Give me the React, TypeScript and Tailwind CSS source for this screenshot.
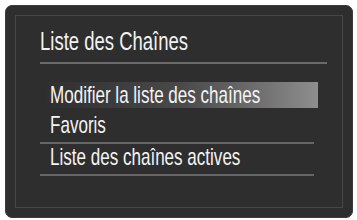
const items = ['Modifier la liste des chaînes', 'Favoris', 'Liste des chaînes actives'];

export default function App() {
  return (
    <div className="w-[357px] h-[220px] bg-white pt-[5px] pl-[5px]">
      <div className="w-[348px] h-[213px] rounded-[7px] bg-[#2e2e2e] border border-[#3b3b3b] p-[9px]">
        <div className="h-full border border-[#474747] pl-[24px] pt-[12px] font-['Liberation_Sans',sans-serif]">
          <div className="text-[25px] leading-[26px] text-[#f2f2f2] whitespace-nowrap">
            <span className="inline-block origin-left scale-x-[0.74]">Liste des Chaînes</span>
          </div>
          <div className="mt-[8px] w-[287px] h-[2px] bg-[#6a6a6a]" />
          <div className="mt-[18px] w-[274px]">
            {items.map((label, i) => (
              <div key={label} className={i === 0 ? 'h-[30px]' : 'h-[32px] border-b-2 border-[#666666]'}>
                <div
                  className={`h-[26px] ml-[7px] w-[271px] pl-[3px] text-[24px] leading-[26px] text-[#f4f4f4] whitespace-nowrap ${
                    i === 0 ? 'bg-gradient-to-r from-[#2f2f2f] via-[#4a4a4a] to-[#8e8e8e]' : ''
                  }`}
                >
                  <span className="inline-block origin-left scale-x-[0.71]">{label}</span>
                </div>
              </div>
            ))}
          </div>
        </div>
      </div>
    </div>
  );
}
